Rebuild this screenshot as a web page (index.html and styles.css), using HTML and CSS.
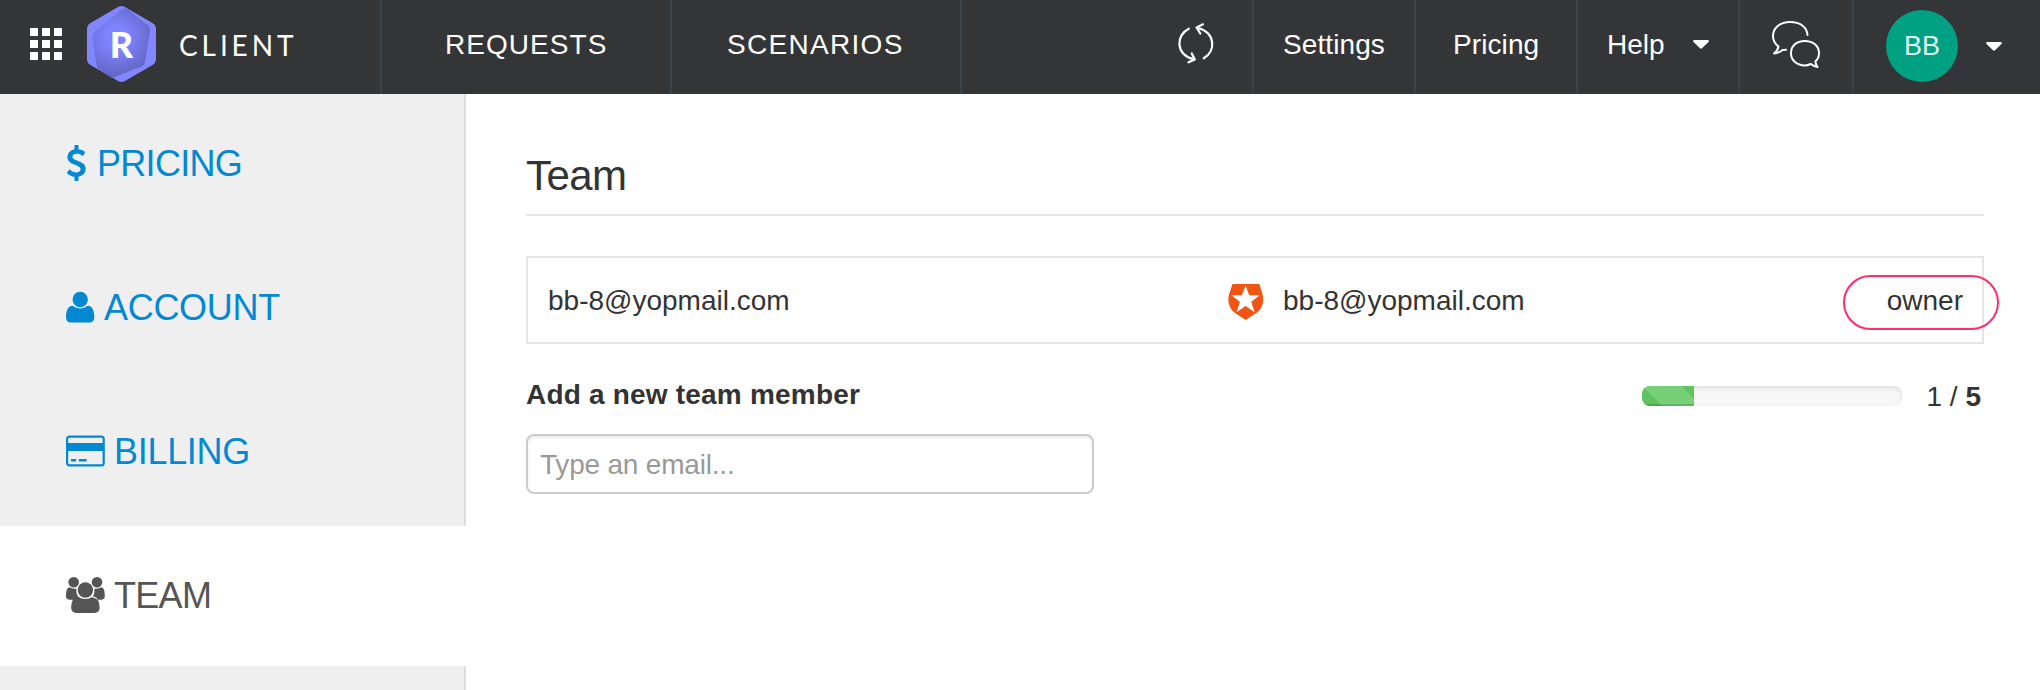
FILE: index.html
```html
<!DOCTYPE html>
<html lang="en">
<head>
<meta charset="utf-8">
<title>Team</title>
<link rel="stylesheet" href="styles.css">
</head>
<body>
<header class="topbar">
  <div class="brand">
    <svg class="apps" width="32" height="32" viewBox="0 0 32 32" fill="#fff"><path d="M0 0h8v8H0zM12 0h8v8h-8zM24 0h8v8h-8zM0 12h8v8H0zM12 12h8v8h-8zM24 12h8v8h-8zM0 24h8v8H0zM12 24h8v8h-8zM24 24h8v8h-8z"/></svg>
    <span class="logo">
      <svg width="69" height="76" viewBox="0 0 69 76">
        <defs>
          <radialGradient id="shade" gradientUnits="userSpaceOnUse" cx="30" cy="32" r="38">
            <stop offset="0.3" stop-color="#7f83ff"/><stop offset="1" stop-color="#6266c2"/>
          </radialGradient>
        </defs>
        <path fill="#8286ff" d="M31 1q3.500-2 7 0l27.500 16q3.500 2 3.500 6v30q0 4-3.500 6L38 75q-3.500 2-7 0L3.500 59Q0 57 0 53V23q0-4 3.500-6z"/>
        <path fill="url(#shade)" d="M35 3.500q3-2 6 0l20 16q2.500 2 2 5.500l-5 31q-.5 3-3.500 4.500L25 72 11 63Q10 61 9.500 58L5.500 33q-.5-5 3-8z"/>
      </svg>
      <span class="logo-letter">R</span>
    </span>
    <span class="brand-name">CLIENT</span>
  </div>
  <a class="tab requests"><span>REQUESTS</span></a>
  <a class="tab scenarios"><span>SCENARIOS</span></a>
  <div class="sync">
    <svg width="40" height="44" viewBox="1176 23 40 44" fill="none" stroke="#fff" stroke-width="2.200" stroke-linecap="round" stroke-linejoin="round"><path d="M1188.800 29.700C1176 36 1175 55 1193.500 60.300M1191.800 54.500l3 6-6.300 2.800M1203.700 59.300C1216 52 1216 34 1197.500 28.800M1203 25.300l-6.500 3.200 3.800 6"/></svg>
  </div>
  <a class="link settings"><span>Settings</span></a>
  <a class="link pricing"><span>Pricing</span></a>
  <a class="link help"><span>Help</span><svg width="16" height="9" viewBox="0 0 16 9"><path fill="#fff" d="M1 0h14q1.500 0.800 .5 2L9 8.300q-1 .8-2 0L.5 2Q-.5.800 1 0z"/></svg></a>
  <div class="chat">
    <svg width="50" height="50" viewBox="1771 18 50 50" fill="none" stroke="#fff" stroke-width="2" stroke-linecap="round" stroke-linejoin="round"><path d="M1807.500 34C1807 26 1800 21 1790 21c-10 0-17 6-17 14 0 5 2 8 5.500 10.500-.5 3-2 5-4.500 7 4 0 6-1.500 8.500-3.500l3.500-.2M1815.500 60.300c2.500-2 3.500-5 3.500-8 0-7.500-6-12.300-14.200-12.300s-13.800 4.800-13.800 12.300c0 7.200 6 12.200 13.800 12.200 2.300 0 4-.5 6-1.500 2 1.600 3.800 2.600 6.800 3-1.700-2.300-2.200-4-2.100-5.700z"/></svg>
  </div>
  <div class="profile">
    <span class="avatar">BB</span>
    <svg width="16" height="9" viewBox="0 0 16 9"><path fill="#fff" d="M1 0h14q1.500 0.800 .5 2L9 8.300q-1 .8-2 0L.5 2Q-.5.800 1 0z"/></svg>
  </div>
</header>
<div class="layout">
  <nav class="sidebar">
    <a class="item tight">
      <svg width="31" height="40" viewBox="0 0 31 40"><path fill="currentColor" transform="translate(-7.700 1) scale(.0201)" d="M1362 1185q0 153-99.500 263.500t-258.500 136.500v175q0 14-9 23t-23 9h-135q-13 0-22.500-9.500t-9.500-22.500v-175q-66-9-127.500-31t-101.500-44.500-74-48-46.500-37.500-17.500-18q-17-21-2-41l103-135q7-10 23-12 15-2 24 9l2 2q113 99 243 125 37 8 74 8 81 0 142.500-43t61.500-122q0-28-15-53t-33.500-42-58.500-37.500-66-32-80-32.500q-39-16-61.500-25t-61.500-26.500-62.500-31-56.500-35.500-53.500-42.500-43.500-49-35.500-58-21-66.500-8.500-78q0-138 98-242t255-134v-180q0-13 9.500-22.500t22.500-9.500h135q14 0 23 9t9 23v176q57 6 110.500 23t87 33.500 63.500 37.500 39 29 15 14q17 18 5 38l-81 146q-8 15-23 16-14 3-27-7-3-3-14.500-12t-39-26.500-58.500-32-74.500-26-85.500-11.500q-95 0-155 43t-60 111q0 26 8.500 48t29.500 41.500 39.500 33 56 31 60.500 27 70 27.500q53 20 81 31.500t76 35 75.500 42.500 62 50 53 63.500 31.500 76.500 13 94z"/></svg>
      <span>PRICING</span>
    </a>
    <a class="item">
      <svg width="38" height="40" viewBox="0 0 38 40" fill="currentColor"><circle cx="14.200" cy="11.500" r="7.700"/><path d="M6.500 17.800q7.700 5.400 15.400 0C26.500 17.800 28.300 23 28.300 29.500c0 3-2 5-5 5H5c-3 0-5-2-5-5C0 23 1.900 17.800 6.500 17.800z"/></svg>
      <span>ACCOUNT</span>
    </a>
    <a class="item">
      <svg width="48" height="40" viewBox="0 0 48 40"><rect x="1.100" y="4.600" width="36.600" height="28.800" rx="2.500" fill="none" stroke="currentColor" stroke-width="2.200"/><path fill="currentColor" d="M1 11h37v8H1zM5 27h5.200v2.500H5zM12.800 27h7.800v2.500h-7.800z"/></svg>
      <span>BILLING</span>
    </a>
    <a class="item tight active">
      <svg width="48" height="40" viewBox="0 0 48 40" fill="currentColor"><circle cx="7.700" cy="6.300" r="5.300"/><circle cx="31" cy="6.300" r="5.300"/><circle cx="19.400" cy="14" r="7.700"/><path d="M3.300 11.200q3.500 2 7.200 1.200-.8 5 2 9-3.200.2-5.200 2.300H4c-2.600 0-4-1.200-4-3.700 0-4 .6-8.200 3.300-8.800zM35.500 11.200q-3.500 2-7.200 1.200.8 5-2 9 3.200.2 5.200 2.300h3.300c2.600 0 4-1.200 4-3.700 0-4-.6-8.200-3.300-8.800zM11.800 20.500q7.600 5.200 15.200 0C31.600 20.500 33.600 26 33.600 32c0 3-2 4.900-5 4.900H10.200c-3 0-5-1.900-5-4.900 0-6 2-11.500 6.600-11.500z"/></svg>
      <span>TEAM</span>
    </a>
  </nav>
  <main class="content">
    <h1 class="title">Team</h1>
    <section class="member">
      <span class="email">bb-8@yopmail.com</span>
      <svg class="provider" width="36" height="36" viewBox="0 0 36 36"><path fill="#f05513" d="M4.500 0h26.800l3 9.500c2.500 8-.3 15.500-6.300 19.800L17.600 36 7.500 29.300C1.500 25-1.300 17.500 1.300 9.500z"/><path fill="#fff" d="M17.600 1.500l3.600 9.700h10.500l-8.400 6.600 3.300 10.400-9-6.300-9 6.300 3.300-10.400-8.500-6.600h10.500z"/></svg>
      <span class="identity">bb-8@yopmail.com</span>
      <span class="role">owner</span>
    </section>
    <section class="add">
      <div class="add-form">
        <label class="add-label" for="email">Add a new team member</label>
        <input class="add-input" id="email" type="text" placeholder="Type an email...">
      </div>
      <div class="usage">
        <div class="progress"><div class="bar"></div></div>
        <span class="count">1 / <b>5</b></span>
      </div>
    </section>
  </main>
</div>
</body>
</html>
```
FILE: styles.css
```css
*, *::after { box-sizing: border-box; }
body {
  margin: 0;
  height: 690px;
  overflow: hidden;
  background: #fff;
  color: #333;
  font: 28px/40px "Liberation Sans", Arial, sans-serif;
}
svg { display: block; flex: none; }

/* Top bar */
.topbar {
  display: flex;
  height: 94px;
  background: #343537;
  color: #fff;
}
.topbar > * {
  display: flex;
  align-items: center;
  flex: none;
  height: 94px;
  padding-bottom: 6px;
  border-right: 2px solid #3b4248;
  white-space: nowrap;
}
.brand { width: 382px; padding-left: 30px; }
.logo { position: relative; margin-left: 25px; }
.logo-letter {
  position: absolute;
  inset: 0;
  text-align: center;
  font: 900 36px/76px Lato, sans-serif;
}
.brand-name {
  margin-left: 23px;
  padding-top: 2px;
  font: 28px/40px Lato, sans-serif;
  letter-spacing: 3.9px;
}
.tab > span, .link > span { padding-top: 2px; }
.requests { width: 290px; padding-left: 63px; letter-spacing: 1.05px; }
.scenarios { width: 290px; padding-left: 55px; letter-spacing: 1.3px; }
.sync { width: 292px; padding-left: 214px; }
.settings { width: 162px; padding-left: 29px; letter-spacing: .1px; }
.pricing { width: 162px; padding-left: 37px; letter-spacing: .1px; }
.help { width: 162px; padding-left: 29px; gap: 28px; }
.chat { width: 114px; padding-left: 31px; }
.topbar > .profile {
  flex: 1;
  padding: 0 0 2px 32px;
  gap: 28px;
  border: 0;
}
.avatar {
  width: 72px;
  height: 72px;
  border-radius: 50%;
  background: #00a083;
  color: #e0f3ef;
  font-size: 27px;
  line-height: 73px;
  text-align: center;
}

/* Page */
.layout { display: flex; height: 596px; }
.sidebar {
  display: flex;
  flex-direction: column;
  gap: 4px;
  width: 466px;
  flex: none;
  background: #efefef;
  border-right: 2px solid #ddd;
}
.item {
  display: flex;
  align-items: center;
  height: 140px;
  padding-left: 66px;
  color: #0389d2;
  font-size: 36px;
  letter-spacing: -.3px;
}
.tight { letter-spacing: -.7px; }
.active { margin-right: -2px; background: #fff; color: #555; }

.content { flex: 1; padding: 60px 56px 0 60px; }
.title {
  margin: 0;
  height: 62px;
  border-bottom: 2px solid #e5e5e5;
  font-size: 42px;
  font-weight: normal;
  letter-spacing: -.6px;
  line-height: 44px;
}
.member {
  position: relative;
  display: flex;
  align-items: center;
  height: 88px;
  margin-top: 40px;
  padding: 2px 19px 0 20px;
  border: 2px solid #e5e5e5;
}
.email { width: 680px; }
.identity { margin-left: 19px; }
.provider { margin-top: 2px; }
.role { margin-left: auto; }
.role::after {
  content: "";
  position: absolute;
  right: -17px;
  top: 17px;
  width: 156px;
  height: 55px;
  border: 2px solid #ff2d6b;
  border-radius: 28px;
}
.add { display: flex; justify-content: space-between; margin-top: 30px; }
.add-form { display: flex; flex-direction: column; width: 568px; }
.add-label { height: 60px; padding-top: 1px; font-weight: bold; letter-spacing: .2px; }
.add-input {
  height: 60px;
  padding: 2px 12px 0;
  border: 2px solid #ccc;
  border-radius: 8px;
  background: #fff;
  box-shadow: inset 0 2px 2px rgba(0, 0, 0, .075);
  color: #555;
  font: inherit;
  letter-spacing: -.2px;
}
.add-input::placeholder { color: #999; opacity: 1; }
.usage { display: flex; align-items: center; height: 44px; padding-right: 3px; }
.count { padding-top: 2px; }
.progress {
  width: 260px;
  height: 20px;
  margin-right: 25px;
  border-radius: 8px;
  overflow: hidden;
  background: #f7f7f7;
  box-shadow: inset 0 2px 4px rgba(0, 0, 0, .1);
}
.bar {
  width: 20%;
  height: 20px;
  background: linear-gradient(45deg, #5ec45e 0 28%, #77d077 28% 83%, #5ec45e 83%);
  box-shadow: inset 0 -2px 0 rgba(0, 0, 0, .15);
}
```
